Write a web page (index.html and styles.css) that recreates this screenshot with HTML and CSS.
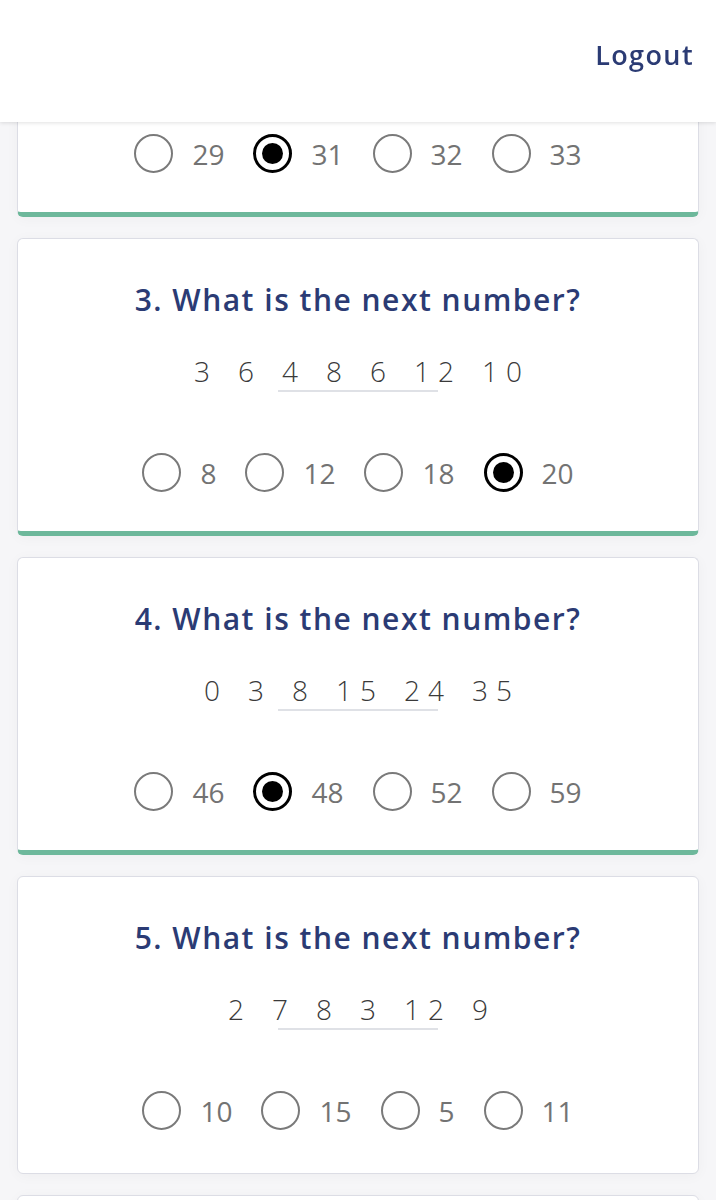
FILE: index.html
```html
<!DOCTYPE html>
<html>
<head>
<meta charset="utf-8">
<link rel="stylesheet" href="styles.css">
</head>
<body>
<header class="topbar">
  <a class="logout" href="#">Logout</a>
</header>
<main class="quiz">
  <section class="card answered">
    <h2 class="q-title">2. What is the next number?</h2>
    <div class="seq"><span>1</span><span>3</span><span>7</span><span>13</span><span>21</span></div>
    <div class="seq-line"></div>
    <div class="options">
      <label class="opt"><span class="radio"></span><span class="val">29</span></label>
      <label class="opt"><span class="radio on"></span><span class="val">31</span></label>
      <label class="opt"><span class="radio"></span><span class="val">32</span></label>
      <label class="opt"><span class="radio"></span><span class="val">33</span></label>
    </div>
  </section>
  <section class="card answered">
    <h2 class="q-title">3. What is the next number?</h2>
    <div class="seq"><span>3</span><span>6</span><span>4</span><span>8</span><span>6</span><span>12</span><span>10</span></div>
    <div class="seq-line"></div>
    <div class="options">
      <label class="opt"><span class="radio"></span><span class="val">8</span></label>
      <label class="opt"><span class="radio"></span><span class="val">12</span></label>
      <label class="opt"><span class="radio"></span><span class="val">18</span></label>
      <label class="opt"><span class="radio on"></span><span class="val">20</span></label>
    </div>
  </section>
  <section class="card answered">
    <h2 class="q-title">4. What is the next number?</h2>
    <div class="seq"><span>0</span><span>3</span><span>8</span><span>15</span><span>24</span><span>35</span></div>
    <div class="seq-line"></div>
    <div class="options">
      <label class="opt"><span class="radio"></span><span class="val">46</span></label>
      <label class="opt"><span class="radio on"></span><span class="val">48</span></label>
      <label class="opt"><span class="radio"></span><span class="val">52</span></label>
      <label class="opt"><span class="radio"></span><span class="val">59</span></label>
    </div>
  </section>
  <section class="card">
    <h2 class="q-title">5. What is the next number?</h2>
    <div class="seq"><span>2</span><span>7</span><span>8</span><span>3</span><span>12</span><span>9</span></div>
    <div class="seq-line"></div>
    <div class="options">
      <label class="opt"><span class="radio"></span><span class="val">10</span></label>
      <label class="opt"><span class="radio"></span><span class="val">15</span></label>
      <label class="opt"><span class="radio"></span><span class="val">5</span></label>
      <label class="opt"><span class="radio"></span><span class="val">11</span></label>
    </div>
  </section>
  <section class="card"></section>
</main>
</body>
</html>
```
FILE: styles.css
```css
html, body {
  margin: 0;
  padding: 0;
}
body {
  background: #f6f6f8;
  font-family: "Open Sans", "Liberation Sans", sans-serif;
  overflow: hidden;
}
.topbar {
  position: fixed;
  top: 0;
  left: 0;
  right: 0;
  height: 122px;
  background: #ffffff;
  box-shadow: 0 1px 4px rgba(0, 0, 0, 0.12);
  display: flex;
  align-items: center;
  justify-content: flex-end;
  padding: 0 22px 14px 0;
  box-sizing: border-box;
  z-index: 10;
}
.logout {
  color: #2b3b74;
  font-size: 27px;
  font-weight: 600;
  text-decoration: none;
  letter-spacing: 1.4px;
}
.quiz {
  margin-top: -81px;
  padding: 0 17px;
  display: flex;
  flex-direction: column;
  gap: 21px;
}
.card {
  background: #ffffff;
  border: 1px solid #dcdde5;
  border-radius: 6px;
  height: 298px;
  box-sizing: border-box;
  padding-top: 43px;
  display: flex;
  flex-direction: column;
  align-items: center;
  box-shadow: 0 2px 14px rgba(0, 0, 0, 0.035);
}
.card.answered {
  border-bottom: 5px solid #6db89b;
}
.q-title {
  margin: 0;
  font-size: 30px;
  line-height: 36px;
  font-weight: 600;
  color: #2b3b74;
  letter-spacing: 1.5px;
}
.seq {
  margin-top: 37px;
  display: flex;
  gap: 28px;
  font-size: 28px;
  line-height: 32px;
  font-weight: 300;
  color: #3a3a3a;
  letter-spacing: 8px;
}
.seq span {
  margin-right: -8px;
}
.seq-line {
  width: 160px;
  height: 2px;
  background: #dfe1e6;
  margin-top: 3px;
}
.options {
  margin-top: 61px;
  display: flex;
  align-items: center;
  gap: 29px;
}
.opt {
  display: flex;
  align-items: center;
  gap: 19px;
}
.radio {
  width: 39px;
  height: 39px;
  box-sizing: border-box;
  border: 2px solid #7a7a7a;
  border-radius: 50%;
  background: #fff;
  display: flex;
  align-items: center;
  justify-content: center;
}
.radio.on {
  border: 3px solid #000;
}
.radio.on::after {
  content: "";
  width: 21px;
  height: 21px;
  border-radius: 50%;
  background: #000;
}
.val {
  font-size: 28px;
  font-weight: 400;
  color: #737373;
}
```
